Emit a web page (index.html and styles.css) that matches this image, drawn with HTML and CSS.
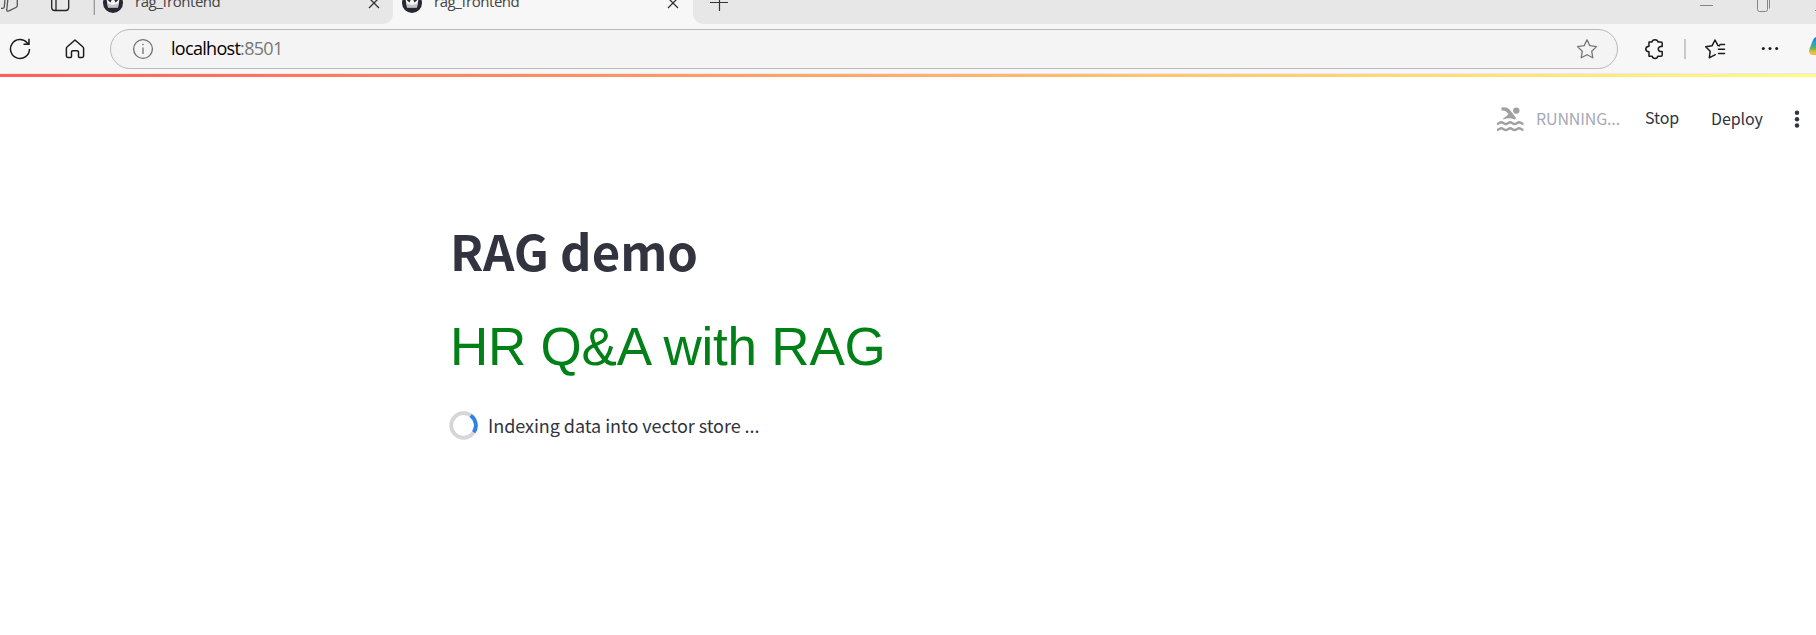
FILE: index.html
```html
<!DOCTYPE html>
<html lang="en">
<head>
<meta charset="utf-8">
<title>rag_frontend</title>
<link rel="stylesheet" href="styles.css">
</head>
<body>
<header class="browser">
  <div class="strip">
    <div class="tab first">
      <svg class="strip-icons" width="102" height="44" viewBox="0 -20 102 44" fill="none" stroke="#222" stroke-width="1.3">
        <path d="M6.700 10.200l1-9.500c.1-1 .6-1.800 1.600-2.100l5.500-1.800c1.500-.4 2.500.3 2.500 1.700v7c0 1-.5 1.600-1.400 2L9 10.900c-1.300.5-2.400.4-2.300-.7z" stroke="#555"/>
        <path d="M1 8.300h1.500c1 0 1.600-.5 1.800-1.500l.8-8" stroke="#555"/>
        <rect x="51.700" y="-7" width="17" height="17.500" rx="3"/><path d="M56 -7V10.500"/>
        <path d="M94.300 -6V15" stroke="#999"/>
      </svg>
      <svg class="favicon" width="20" height="20" viewBox="0 0 20 20"><circle cx="10" cy="10" r="10" fill="#272733"/><path d="M3.500 6l4 3.500L10 4l2.500 5.500 4-3.500-1.500 8.500H5z" fill="#f4f4f4"/><path d="M4.500 10.500l5.500 1.500 5.500-1.500-.6 4H5.100z" fill="#c4c4c6"/></svg>
      <span class="tab-title">rag_frontend</span>
      <svg class="close" width="12" height="12" viewBox="0 0 12 12"><path d="M1 1l10 10M11 1L1 11" stroke="#333" stroke-width="1.300"/></svg>
    </div>
    <div class="tab active">
      <svg class="favicon" width="20" height="20" viewBox="0 0 20 20"><circle cx="10" cy="10" r="10" fill="#272733"/><path d="M3.500 6l4 3.500L10 4l2.500 5.500 4-3.500-1.500 8.500H5z" fill="#f4f4f4"/><path d="M4.500 10.500l5.500 1.500 5.500-1.500-.6 4H5.100z" fill="#c4c4c6"/></svg>
      <span class="tab-title">rag_frontend</span>
      <svg class="close" width="12" height="12" viewBox="0 0 12 12"><path d="M1 1l10 10M11 1L1 11" stroke="#333" stroke-width="1.300"/></svg>
    </div>
    <div class="strip-rest">
      <svg class="plus" width="18" height="18" viewBox="0 0 18 18"><path d="M0 8.500h18M9.500 0v17" stroke="#333" stroke-width="1.200"/></svg>
      <svg class="window" width="116" height="24" viewBox="1700 -12 116 24" fill="none" stroke="#858585"><path d="M1700 2.500h13M1815 7.500h1"/><path d="M1757.500 -4h10v10.500q0 2-2 2h-6q-2 0-2-2zM1769.500 -3V5.500"/></svg>
    </div>
  </div>
  <div class="toolbar">
    <svg class="reload" width="22" height="22" viewBox="0 0 22 22" fill="none" stroke="#1b1b1b" stroke-width="1.500"><path d="M20.500 11a9.500 9.500 0 1 1-2.300-6.200L19.500 6M20 .7V6.300H14.500"/></svg>
    <svg class="home" width="20" height="22" viewBox="0 0 20 22" fill="none" stroke="#1b1b1b" stroke-width="1.500" stroke-linejoin="round"><path d="M10 2L2 9q-.6.500-.6 1.500V18q0 1.400 1.400 1.400H5.500q1 0 1-1V14q0-1.300 1.300-1.300h4.400q1.300 0 1.300 1.300v4.400q0 1 1 1h2.700q1.400 0 1.400-1.400V10.500q0-1-.6-1.500z"/></svg>
    <div class="address">
      <svg class="info" width="22" height="22" viewBox="0 0 22 22" fill="none" stroke="#707070" stroke-width="1.300"><circle cx="11" cy="11" r="9.400"/><path d="M11 9.500V16"/><circle cx="11" cy="6.500" r=".5" fill="#707070" stroke-width=".7"/></svg>
      <span class="url">localhost<span class="port">:8501</span></span>
      <svg class="star" width="22" height="22" viewBox="0 0 22 22" fill="none" stroke="#777" stroke-width="1.300" stroke-linejoin="round"><path d="M11 1.800L13.800 7.600 20.500 8.600 15.700 13.200 16.800 19.800 11 16.700 5.200 19.800 6.300 13.200 1.500 8.600 8.200 7.600z"/></svg>
    </div>
    <svg class="tools" width="198" height="30" viewBox="1618 34 198 30" fill="none" stroke="#1b1b1b" stroke-width="1.500" stroke-linejoin="round">
      <path d="M1649 42h3q.3-2.300 3-2.300t3 2.300h3q1.200 0 1.200 1.200v3.200h-1.700q-2.200.5-2.200 2.600t2.200 2.600h1.700v3.400q0 1.200-1.200 1.200h-3.200q-.3 2.200-2.800 2.200t-2.800-2.200h-3.200v-4.400q-3.200-.3-3.200-2.800t3.200-2.800z"/>
      <path d="M1685 39v20" stroke="#c8c8c8" stroke-width="2"/>
      <path d="M1719.500 45.800l-1.500-.2-3-5.600-3 5.800-6.300 1 4.500 4.400-.9 6.600 6-3.100M1720 44.600h4.500M1718.500 49.200h6M1718.500 53.500h6" stroke-linecap="round"/>
      <g fill="#1b1b1b" stroke="none"><circle cx="1763.300" cy="48.500" r="1.500"/><circle cx="1770" cy="48.500" r="1.500"/><circle cx="1776.700" cy="48.500" r="1.500"/></g>
      <defs><linearGradient id="copilot" x1="0" y1="0" x2="0" y2="1"><stop offset="0" stop-color="#236fe0"/><stop offset=".3" stop-color="#259fda"/><stop offset=".6" stop-color="#5dae66"/><stop offset=".85" stop-color="#e8c52b"/><stop offset="1" stop-color="#ffab45"/></linearGradient></defs>
      <path d="M1817 37q-3 0-4.500 4l-3 8q-1.500 6 4 6h4z" fill="url(#copilot)" stroke="none"/>
    </svg>
  </div>
</header>
<div class="decoration"></div>
<div class="status">
  <svg class="swim" width="27" height="25" viewBox="0 0 27 25" fill="none" stroke="#a0a0a0" stroke-width="2.400">
    <path d="M0 17c2 0 2.600-1.700 4.400-1.700s2.600 1.700 4.400 1.700 2.600-1.700 4.400-1.700 2.600 1.700 4.400 1.700 2.600-1.700 4.400-1.700 2.400 1.700 4.400 1.700M0 23c2 0 2.600-1.700 4.400-1.700s2.600 1.700 4.400 1.700 2.600-1.700 4.400-1.700 2.600 1.700 4.400 1.700 2.600-1.700 4.400-1.700 2.400 1.700 4.400 1.700"/>
    <path d="M4.500.4q5-1 8 2.100l6.700 8.500-1.700 1.600q-5.500-2.600-11 0L6 11.700l5.500-4.500L9 4.600Q7 3 4.500 3.600z" fill="#a0a0a0" stroke="none"/><circle cx="19.300" cy="3.600" r="3.200" fill="#a0a0a0" stroke="none"/>
  </svg>
  <span class="running">RUNNING...</span>
  <span class="stop">Stop</span>
  <span class="deploy">Deploy</span>
  <svg class="kebab" width="6" height="18" viewBox="0 0 6 18" fill="#31333f"><circle cx="3" cy="2.800" r="2.200"/><circle cx="3" cy="9.200" r="2.200"/><circle cx="3" cy="15.500" r="2.200"/></svg>
</div>
<main class="content">
  <h1 class="title">RAG demo</h1>
  <p class="subtitle">HR Q&amp;A with RAG</p>
  <div class="loading">
    <svg width="29" height="29" viewBox="0 0 29 29" fill="none" stroke-width="3.800"><circle cx="14.500" cy="14.500" r="12.300" stroke="#d6d6d8"/><path d="M21.700 4.500A12.300 12.300 0 0 1 24.800 21.300" stroke="#2f82df"/></svg>
    <span class="loading-text">Indexing data into vector store ...</span>
  </div>
</main>
</body>
</html>
```

FILE: styles.css
```css
* { box-sizing: border-box; }
body { margin: 0; background: #fff; height: 635px; overflow: hidden; color: #31333f; font-family: "Noto Sans CJK SC", sans-serif; }
svg { display: block; flex: none; }
.browser { background: #f7f7f7; font-family: "Open Sans", sans-serif; }
.strip { display: flex; align-items: flex-end; height: 24px; overflow: hidden; }
.tab { display: flex; align-items: center; height: 43px; flex: none; }
.first { width: 393px; background: #e7e7e7; border-bottom-right-radius: 10px; }
.active { width: 300px; padding-left: 8px; }
.strip-rest { display: flex; align-items: center; flex: 1; height: 43px; background: #e7e7e7; border-bottom-left-radius: 10px; padding-left: 17px; }
.strip-icons { width: 102px; margin-top: -1px; }
.favicon { margin-left: 1px; }
.tab-title { margin: 0 0 3px 12px; font-size: 15px; line-height: 20px; color: #444; white-space: nowrap; letter-spacing: -0.45px; }
.close { margin-left: auto; margin-right: 13px; }
.active .close { margin-right: 14px; }
.window { margin-left: auto; }
.toolbar { display: flex; align-items: center; height: 50px; padding-left: 9px; border-bottom: 1px solid #e9e9ee; }
.home { margin-left: 34px; }
.address { display: flex; align-items: center; width: 1508px; height: 40px; margin-left: 25px; padding: 0 19px 0 21px; border: 1px solid #b9b9b9; border-radius: 20px; background: #f4f4f4; flex: none; }
.url { margin: 0 0 2px 17px; font-size: 18px; line-height: 24px; color: #000; letter-spacing: -0.7px; white-space: nowrap; }
.port { color: #777; }
.star { margin-left: auto; }
.decoration { height: 3px; background: linear-gradient(90deg, #ff5f56, #fffd80); }
.status { display: flex; align-items: center; justify-content: flex-end; height: 84px; padding-right: 16px; font-size: 16px; line-height: 24px; white-space: nowrap; }
.running { margin: 0 0 2px 12px; color: #a8a9b7; width: 84px; letter-spacing: -0.15px; }
.stop { margin: 0 0 4px 25px; width: 34px; letter-spacing: -0.1px; }
.deploy { margin: 0 0 2px 32px; width: 52px; letter-spacing: -0.1px; }
.kebab { margin-left: 31px; }
.content { padding: 49px 0 0 450px; }
.title { margin: 0; font-size: 49px; line-height: 80px; font-weight: 700; white-space: nowrap; }
.subtitle { margin: 17px 0 0; font-family: "Liberation Sans", sans-serif; font-size: 53px; line-height: 80px; color: #008017; letter-spacing: -0.22px; white-space: nowrap; }
.loading { display: flex; align-items: center; height: 30px; margin: 23px 0 0 -1px; }
.loading-text { margin: 0 0 1px 10px; font-size: 18px; line-height: 28px; letter-spacing: -0.05px; white-space: nowrap; }
```
